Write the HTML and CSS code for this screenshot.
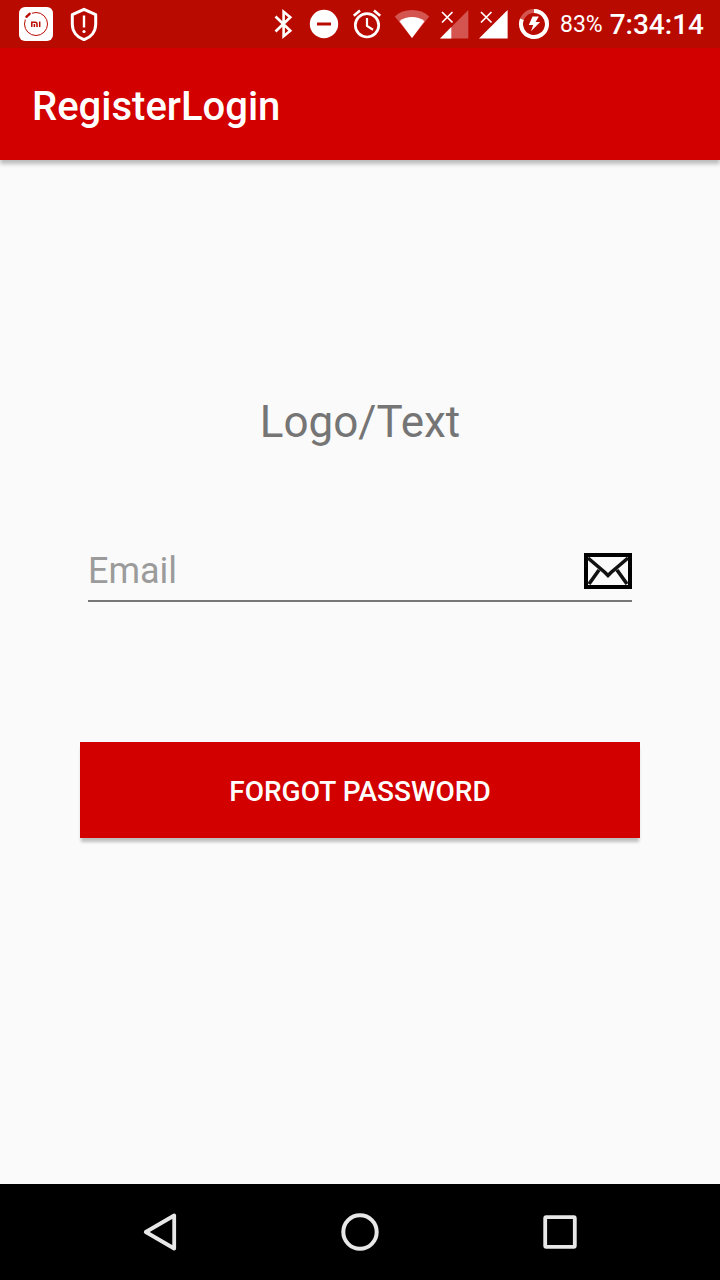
FILE: index.html
```html
<!DOCTYPE html>
<html lang="en">
<head>
<meta charset="utf-8">
<meta name="viewport" content="width=device-width, initial-scale=1">
<title>RegisterLogin</title>
<link rel="stylesheet" href="styles.css">
</head>
<body>
<div class="screen">
  <div class="status-bar">
    <div class="notifications">
      <svg width="34" height="34" viewBox="19 7 34 34" aria-hidden="true">
        <rect x="19" y="7" width="34" height="34" rx="6" fill="#fff"/>
        <circle cx="36" cy="24" r="11.5" fill="none" stroke="#b90a00" stroke-width="1"/>
        <path d="M24.5 18.5L31 12.500" stroke="#fff" stroke-width="5"/>
        <path d="M26.4 16.8L29.6 13.8" stroke="#b90a00" stroke-width="2.4" stroke-linecap="round"/>
        <path d="M31.8 27V22.2H35.2Q37 22.2 37 24V27M34.4 24V27M39.7 21.5V27" fill="none" stroke="#b90a00" stroke-width="1.5"/>
      </svg>
      <svg width="28" height="34" viewBox="70 7 28 34" aria-hidden="true">
        <path d="M84 9.300L95.700 14.700V24C95.700 31.5 91 37.300 84 39.700C77 37.300 72.300 31.5 72.300 24V14.700Z" fill="none" stroke="#fff" stroke-width="3" stroke-linejoin="round"/>
        <path d="M84 15.5V27.5" stroke="#fff" stroke-width="2.4"/>
        <circle cx="84" cy="31.5" r="1.6" fill="#fff"/>
      </svg>
    </div>
    <div class="indicators">
      <svg width="28" height="32" viewBox="270 8 28 32" aria-hidden="true">
        <path d="M275.5 16.5L290.3 30.7L283.6 36.2V11.8L290.3 17.3L275.5 31.5" fill="none" stroke="#fff" stroke-width="2.6"/>
      </svg>
      <svg width="32" height="32" viewBox="307 8 32 32" aria-hidden="true">
        <circle cx="323" cy="24" r="14.2" fill="#fff"/>
        <rect x="316" y="22.5" width="14" height="3" fill="#b90a00"/>
      </svg>
      <svg width="34" height="32" viewBox="350 8 34 32" aria-hidden="true">
        <g fill="none" stroke="#fff">
          <circle cx="367" cy="25.3" r="11.7" stroke-width="2.7"/>
          <path d="M353.8 15.7L360 10.5M380.2 15.7L374 10.5" stroke-width="2.7"/>
          <path d="M367 18V26L373 29.7" stroke-width="2.2"/>
        </g>
      </svg>
      <svg width="36" height="32" viewBox="394 8 36 32" aria-hidden="true">
        <path d="M412 38L394.8 16.4Q402 10 412 10T429.2 16.4Z" fill="#d45550"/>
        <path d="M412 38L399.5 21.2Q405 17 412 17T424.5 21.2Z" fill="#fff"/>
      </svg>
      <svg width="29" height="32" viewBox="441 8 29 32" aria-hidden="true">
        <path d="M441 38.5L469.3 10V38.5Z" fill="#d45550"/>
        <path d="M441 38.5L452.3 27V38.5Z" fill="#fff"/>
        <path d="M443 12L453.5 22.5M453.5 12L443 22.5" stroke="#fff" stroke-width="1.7"/>
      </svg>
      <svg width="29" height="32" viewBox="479 8 29 32" aria-hidden="true">
        <path d="M479 38.5L507.6 10V38.5Z" fill="#fff"/>
        <path d="M481 12L491.5 22.5M491.5 12L481 22.5" stroke="#fff" stroke-width="1.7"/>
      </svg>
      <svg width="32" height="32" viewBox="518 8 32 32" aria-hidden="true">
        <circle cx="534" cy="24" r="13" fill="none" stroke="#d45550" stroke-width="4"/>
        <path d="M534 11A13 13 0 1 1 521.9 19.2" fill="none" stroke="#fff" stroke-width="4"/>
        <path d="M532.5 16.5H538.8L535.6 21.9H540.2L531 31.2L533.2 25H528.8Z" fill="#fff"/>
      </svg>
      <div class="readout">
        <span class="battery">83%</span>
        <time class="clock">7:34:14</time>
      </div>
    </div>
  </div>
  <header class="app-bar"><h1 class="app-title">RegisterLogin</h1></header>
  <main class="content">
    <h2 class="logo-text">Logo/Text</h2>
    <form class="form">
      <div class="field">
        <input class="field-input" type="email" placeholder="Email" aria-label="Email">
        <svg class="field-icon" width="48" height="38" viewBox="0 0 48 38" aria-hidden="true">
          <path fill="#000" fill-rule="evenodd" d="M0 1H48V37H0ZM4 5V33H44V5Z"/>
          <path d="M4 6L21 20.500L24 23.500L27 20.500L44 6M5 32L15 18M43 32L33 18" fill="none" stroke="#111" stroke-width="3.600"/>
        </svg>
      </div>
      <button class="submit" type="button">FORGOT PASSWORD</button>
    </form>
  </main>
  <nav class="nav-bar" aria-label="System">
    <button class="nav-button" type="button" aria-label="Back">
      <svg width="40" height="40" viewBox="140 1212 40 40"><path d="M174.200 1215.500V1248.500L145.800 1232Z" fill="none" stroke="#e8e8e8" stroke-width="3.800" stroke-linejoin="round"/></svg>
    </button>
    <button class="nav-button" type="button" aria-label="Home">
      <svg width="40" height="40" viewBox="340 1212 40 40"><circle cx="360" cy="1232" r="16.700" fill="none" stroke="#e8e8e8" stroke-width="4"/></svg>
    </button>
    <button class="nav-button" type="button" aria-label="Recent apps">
      <svg width="40" height="40" viewBox="540 1212 40 40"><rect x="545.200" y="1217.200" width="29.600" height="29.600" rx="1" fill="none" stroke="#e8e8e8" stroke-width="3.800"/></svg>
    </button>
  </nav>
</div>
</body>
</html>
```
FILE: styles.css
```css
* {
  box-sizing: border-box;
}

body {
  margin: 0;
  background: #fafafa;
  font-family: Roboto, "Liberation Sans", sans-serif;
}

svg {
  display: block;
  flex: none;
}

button {
  border: 0;
  font: inherit;
}

.screen {
  display: flex;
  flex-direction: column;
  min-height: 100vh;
}

.status-bar {
  display: flex;
  align-items: center;
  justify-content: space-between;
  height: 48px;
  padding: 0 16px 0 19px;
  background: #b90a00;
  color: #fff;
}

.notifications {
  display: flex;
  gap: 17px;
}

.indicators {
  display: flex;
  align-items: center;
  gap: 10px;
}

.readout {
  display: flex;
  align-items: center;
  gap: 7px;
}

.battery {
  font-size: 23px;
}

.clock {
  font-size: 28px;
  font-weight: 500;
}

.app-bar {
  display: flex;
  align-items: center;
  height: 112px;
  padding: 4px 32px 0;
  background: #d30000;
  color: #fff;
  box-shadow: 0 4px 4px rgba(0, 0, 0, 0.25);
}

.app-title {
  margin: 0;
  font-size: 40px;
  font-weight: 500;
}

.content {
  flex: 1;
  padding: 236px 80px 48px;
}

.logo-text {
  margin: 0;
  color: #757575;
  font-size: 44px;
  font-weight: 400;
  line-height: 52px;
  text-align: center;
}

.field {
  display: flex;
  align-items: center;
  margin: 94px 8px 140px;
  border-bottom: 2px solid #777;
}

.field-input {
  flex: 1;
  min-width: 0;
  height: 58px;
  padding: 0;
  border: 0;
  outline: 0;
  background: transparent;
  color: #212121;
  font: inherit;
  font-size: 36px;
}

.field-input::placeholder {
  color: #9b9b9b;
  opacity: 1;
}

.submit {
  display: block;
  width: 100%;
  height: 96px;
  padding: 2px 16px 0;
  background: #d30000;
  color: #fff;
  font-size: 28px;
  font-weight: 500;
  box-shadow: 0 5px 3px -1px rgba(0, 0, 0, 0.24);
}

.nav-bar {
  display: flex;
  height: 96px;
  padding: 0 60px;
  background: #000;
}

.nav-button {
  display: flex;
  flex: 1;
  align-items: center;
  justify-content: center;
  padding: 0;
  background: transparent;
}
```
